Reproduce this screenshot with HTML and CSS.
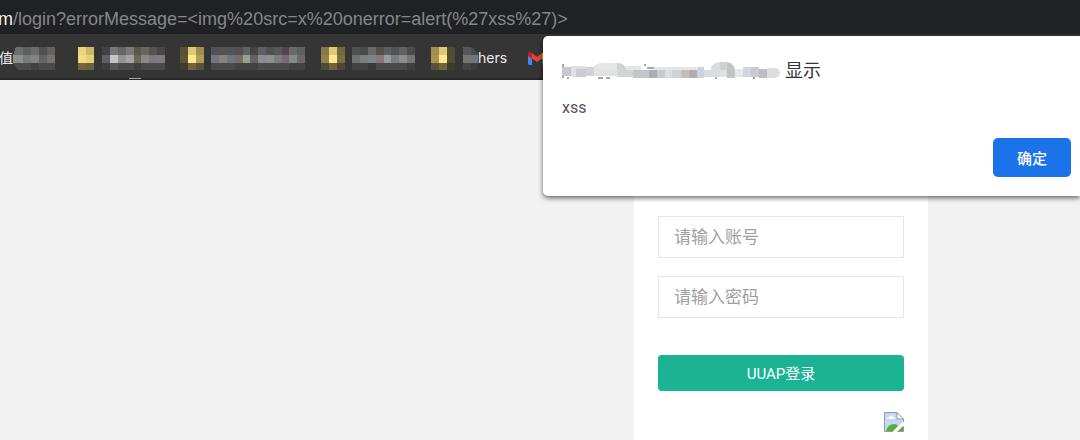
FILE: index.html
```html
<!DOCTYPE html>
<html lang="zh-CN">
<head>
<meta charset="utf-8">
<title>UUAP登录</title>
<link rel="stylesheet" href="styles.css">
</head>
<body>
<header class="browser">
  <div class="address"><span class="host">m</span><span class="path">/login?errorMessage=&lt;img%20src=x%20onerror=alert(%27xss%27)&gt;</span></div>
  <nav class="bookmarks">
    <a class="bookmark" href="#"><span>值</span><svg width="42" height="23" viewBox="0 0 42 23" shape-rendering="crispEdges" aria-hidden="true">
      <path fill="#6d706d" d="M3 0h7v8H0z"/><path fill="#5d605e" d="M10 0h8v8h-8z"/><path fill="#6b6d6c" d="M18 0h8v8h-8z"/><path fill="#505151" d="M26 0h8v8h-8z"/><path fill="#64615f" d="M34 0h8v8h-8z"/>
      <path fill="#8b918c" d="M0 8h10v8H0z"/><path fill="#777b7a" d="M10 8h8v8h-8z"/><path fill="#818383" d="M18 8h8v8h-8z"/><path fill="#636464" d="M26 8h8v8h-8z"/><path fill="#797070" d="M34 8h8v8h-8z"/>
      <path fill="#494a49" d="M0 16h18v7H5z"/><path fill="#404141" d="M18 16h8v7h-8z"/><path fill="#4a4a4a" d="M26 16h16v7H26z"/></svg></a>
    <a class="bookmark" href="#" aria-label="Bookmark folder"><svg width="16" height="23" viewBox="0 0 16 23" shape-rendering="crispEdges" aria-hidden="true">
      <path fill="#ead477" d="M0 0h8v8H0z"/><path fill="#cdb865" d="M8 0h8v8H8z"/><path fill="#f1dc7e" d="M0 8h8v8H0z"/><path fill="#e6d077" d="M8 8h8v8H8z"/><path fill="#716542" d="M0 16h8v7H0z"/><path fill="#6c613e" d="M8 16h8v7H8z"/></svg><svg width="63" height="23" viewBox="0 0 63 23" shape-rendering="crispEdges" aria-hidden="true">
      <path fill="#424244" d="M0 0h8v8H0z"/><path fill="#777778" d="M8 0h8v8H8z"/><path fill="#656666" d="M16 0h8v8h-8z"/><path fill="#777a77" d="M24 0h8v8h-8z"/><path fill="#595750" d="M32 0h7v8h-7z"/><path fill="#696562" d="M39 0h8v8h-8z"/><path fill="#545352" d="M47 0h8v8h-8z"/><path fill="#474648" d="M55 0h8v8h-8z"/>
      <path fill="#5e5f67" d="M0 8h8v8H0z"/><path fill="#c6c4c6" d="M8 8h8v8H8z"/><path fill="#949494" d="M16 8h8v8h-8z"/><path fill="#a1a5a0" d="M24 8h8v8h-8z"/><path fill="#6c6559" d="M32 8h7v8h-7z"/><path fill="#888887" d="M39 8h8v8h-8z"/><path fill="#7c7881" d="M47 8h8v8h-8z"/><path fill="#81797e" d="M55 8h8v8h-8z"/>
      <path fill="#3d3d3e" d="M0 16h8v7H0z"/><path fill="#555556" d="M8 16h8v7H8z"/><path fill="#4b4b4b" d="M16 16h16v7H16z"/><path fill="#404040" d="M32 16h7v7h-7z"/><path fill="#4a4a4a" d="M39 16h24v7H39z"/></svg></a>
    <a class="bookmark" href="#" aria-label="Bookmark folder"><svg width="24" height="23" viewBox="0 0 24 23" shape-rendering="crispEdges" aria-hidden="true">
      <path fill="#575033" d="M0 0h8v8H0z"/><path fill="#dfc976" d="M8 0h8v8H8z"/><path fill="#a18f50" d="M16 0h8v8h-8z"/><path fill="#5d5433" d="M0 8h8v8H0z"/><path fill="#ffe78d" d="M8 8h8v8H8z"/><path fill="#b09d58" d="M16 8h8v8h-8z"/><path fill="#3f3b31" d="M0 16h8v7H0z"/><path fill="#70643d" d="M8 16h8v7H8z"/><path fill="#595138" d="M16 16h8v7h-8z"/></svg><svg width="94" height="23" viewBox="0 0 94 23" shape-rendering="crispEdges" aria-hidden="true">
      <path fill="#50535a" d="M0 0h8v8H0z"/><path fill="#56524f" d="M8 0h8v8H8z"/><path fill="#505359" d="M16 0h8v8h-8z"/><path fill="#525150" d="M24 0h8v8h-8z"/><path fill="#5d635d" d="M32 0h7v8h-7z"/><path fill="#444444" d="M39 0h8v8h-8z"/><path fill="#605e65" d="M47 0h8v8h-8z"/><path fill="#505250" d="M55 0h8v8h-8z"/><path fill="#565858" d="M63 0h8v8h-8z"/><path fill="#514552" d="M71 0h7v8h-7z"/><path fill="#686b67" d="M78 0h8v8h-8z"/><path fill="#5d605e" d="M86 0h8v8h-8z"/>
      <path fill="#707780" d="M0 8h8v8H0z"/><path fill="#8d7e79" d="M8 8h8v8H8z"/><path fill="#6c7682" d="M16 8h8v8h-8z"/><path fill="#786c66" d="M24 8h8v8h-8z"/><path fill="#96a08f" d="M32 8h7v8h-7z"/><path fill="#626365" d="M39 8h8v8h-8z"/><path fill="#908999" d="M47 8h8v8h-8z"/><path fill="#8d908e" d="M55 8h8v8h-8z"/><path fill="#777f7e" d="M63 8h8v8h-8z"/><path fill="#78697a" d="M71 8h7v8h-7z"/><path fill="#858b82" d="M78 8h8v8h-8z"/><path fill="#6e6966" d="M86 8h8v8h-8z"/>
      <path fill="#484949" d="M0 16h24v7H0z"/><path fill="#424242" d="M24 16h23v7H24z"/><path fill="#4b4b4b" d="M47 16h31v7H47z"/><path fill="#434343" d="M78 16h16v7H78z"/></svg></a>
    <a class="bookmark" href="#" aria-label="Bookmark folder"><svg width="24" height="23" viewBox="0 0 24 23" shape-rendering="crispEdges" aria-hidden="true">
      <path fill="#857849" d="M0 0h8v8H0z"/><path fill="#dfc976" d="M8 0h8v8H8z"/><path fill="#74683e" d="M16 0h8v8h-8z"/><path fill="#908149" d="M0 8h8v8H0z"/><path fill="#ffe78d" d="M8 8h8v8H8z"/><path fill="#7c6e40" d="M16 8h8v8h-8z"/><path fill="#504a36" d="M0 16h8v7H0z"/><path fill="#70643d" d="M8 16h8v7H8z"/><path fill="#4b4635" d="M16 16h8v7h-8z"/></svg><svg width="63" height="23" viewBox="0 0 63 23" shape-rendering="crispEdges" aria-hidden="true">
      <path fill="#505252" d="M0 0h8v8H0z"/><path fill="#484c4c" d="M8 0h8v8H8z"/><path fill="#686a68" d="M16 0h8v8h-8z"/><path fill="#594e4c" d="M24 0h8v8h-8z"/><path fill="#5d5e60" d="M32 0h7v8h-7z"/><path fill="#525352" d="M39 0h8v8h-8z"/><path fill="#606160" d="M47 0h8v8h-8z"/><path fill="#4c4d4d" d="M55 0h8v8h-8z"/>
      <path fill="#707272" d="M0 8h8v8H0z"/><path fill="#7b807d" d="M8 8h8v8H8z"/><path fill="#7d838b" d="M16 8h8v8h-8z"/><path fill="#887674" d="M24 8h8v8h-8z"/><path fill="#9a9ba2" d="M32 8h7v8h-7z"/><path fill="#7b7c7d" d="M39 8h8v8h-8z"/><path fill="#8d8f8d" d="M47 8h8v8h-8z"/><path fill="#747674" d="M55 8h8v8h-8z"/>
      <path fill="#434343" d="M0 16h16v7H0z"/><path fill="#393939" d="M16 16h8v7h-8z"/><path fill="#494949" d="M24 16h31v7H24z"/><path fill="#3e3e3e" d="M55 16h8v7h-8z"/></svg></a>
    <a class="bookmark" href="#"><svg width="24" height="23" viewBox="0 0 24 23" shape-rendering="crispEdges" aria-hidden="true">
      <path fill="#a18f50" d="M0 0h8v8H0z"/><path fill="#dfc976" d="M8 0h8v8H8z"/><path fill="#524b34" d="M16 0h8v8h-8z"/><path fill="#a89650" d="M0 8h8v8H0z"/><path fill="#ffe78d" d="M8 8h8v8H8z"/><path fill="#554d31" d="M16 8h8v8h-8z"/><path fill="#595138" d="M0 16h8v7H0z"/><path fill="#70643d" d="M8 16h8v7H8z"/><path fill="#3d3a31" d="M16 16h8v7h-8z"/></svg><span class="label"><svg width="15" height="23" viewBox="0 0 15 23" aria-hidden="true">
      <path fill="#555756" d="M0 0h8v8H0z"/><path fill="#4a4b4b" d="M8 0q5 2 7 8H8z"/><path fill="#747573" d="M0 8h8v8H0z"/><path fill="#747676" d="M8 8h7v8H8z"/><path fill="#444" d="M0 16h8v7H0z"/><path fill="#3b3b3b" d="M8 16h7l-2 7H8z"/></svg>hers</span></a>
    <a class="bookmark" href="#" aria-label="Gmail"><svg width="20" height="15" viewBox="0 0 20 15" aria-hidden="true">
      <path fill="#4285f4" d="M0 4l4 3v7H1.500Q0 14 0 12.500z"/><path fill="#34a853" d="M14 7l4-3v8.500q0 1.500-1.500 1.500H14z"/><path fill="#fbbc04" d="M14 2.500Q18-1.500 18 3v2l-4 3z"/><path fill="#c5221f" d="M0 5V3q0-4.500 4-1v6z"/><path fill="#ea4335" d="M4 2l5 4 5-4v5.500L9 11 4 7.500z"/></svg></a>
  </nav>
  <i class="tick"></i>
</header>
<main class="page">
  <form class="login">
    <input class="field" type="text" placeholder="请输入账号" aria-label="请输入账号">
    <input class="field" type="password" placeholder="请输入密码" aria-label="请输入密码">
    <button class="submit" type="button">UUAP登录</button>
    <svg class="broken" width="20" height="20" viewBox="0 0 20 20" role="img" aria-label="Broken image">
      <path fill="#c7d8f5" d="M1 1h12l6 6v3L9 19H1z"/><path fill="#fff" d="M3 7q0-2 2-2 2-3 4 0 2 0 2 2z"/>
      <path fill="#55ad35" d="M2 19q2-7 8-7 3 0 4 2l-5 5z"/><path fill="#55ad35" d="M14 19l5-5v5z"/>
      <path fill="#fff" d="M13 1l6 6h-6z"/><path fill="none" stroke="#999" d="M9 19.500H.500V.500H13l6.500 6.500v3M13 .500V7h6.500M13.500 19.500h6v-5"/>
    </svg>
  </form>
</main>
<section class="dialog" role="dialog" aria-label="显示">
  <h1 class="title"><svg width="218" height="19" viewBox="0 0 218 19" aria-hidden="true">
    <path stroke="#55555c" stroke-width="1" d="M1 2v14M6 15v2M36 16h5M44 16h4M82 3h2M85 6h7M154 15v2M192 15v2"/>
    <path fill="#cbc6ce" d="M0 5h9v9H0z"/><path fill="#dedfe2" d="M9 4h15v11H9z"/><path fill="#c9cdd3" d="M14 7h10v8H14z"/><path fill="#d2d2d2" d="M24 5h9v9h-9z"/>
    <path fill="#e6e6e7" d="M32 4q5-4 11-3h12v7H32z"/><path fill="#cfd0d2" d="M55 1q8 0 9 6h-9z"/><path fill="#e1e2e3" d="M32 7h23v7H32z"/><path fill="#d3d4d6" d="M55 7h16v8H55z"/>
    <path fill="#e4e5e7" d="M64 4h15v4H64zM92 5h42v4H92z"/><path fill="#c5c6c8" d="M71 8h16v8H71z"/><path fill="#aab0b9" d="M87 8h8v8h-8z"/><path fill="#c8cbd0" d="M95 8h8v8h-8z"/><path fill="#dededf" d="M103 8h7v8h-7z"/><path fill="#cdd3db" d="M110 8h9v8h-9z"/><path fill="#c3bdbb" d="M119 8h8v8h-8z"/><path fill="#b6aeae" d="M127 8h8v8h-8z"/><path fill="#c9d4e0" d="M135 5h7v11h-7z"/>
    <path fill="#dadde0" d="M142 8h16v7h-16zM149 5q3-5 10-5v8h-10z"/><path fill="#cfd1d3" d="M158 0h7v8h-7z"/><path fill="#c2c5c7" d="M165 0q8 2 8 9v7h-8z"/><path fill="#dfe2e5" d="M158 8h7v7h-7z"/><path fill="#eae7e5" d="M173 7h8v8h-8z"/><path fill="#d1d7df" d="M181 5h8v10h-8z"/><path fill="#cacbce" d="M189 5h8v10h-8z"/><path fill="#bebdc3" d="M197 7h8v9h-8z"/><path fill="#dcdee0" d="M205 6h9q4 1 4 5t-5 5h-8z"/></svg><span>显示</span></h1>
  <p class="message">xss</p>
  <button class="ok" type="button">确定</button>
</section>
</body>
</html>
```
FILE: styles.css
```css
* { box-sizing: border-box; }
body {
  margin: 0;
  min-height: 100vh;
  display: flex;
  flex-direction: column;
  overflow: hidden;
  position: relative;
  background: #f2f2f2;
  font-family: Roboto, "Noto Sans CJK SC", sans-serif;
}
.browser { position: relative; background: #353535; border-bottom: 2px solid #262626; }
.address {
  display: flex;
  height: 34px;
  padding-top: 3px;
  background: #202124;
  color: #868789;
  font-family: "Liberation Sans", sans-serif;
  font-size: 18px;
  line-height: 32px;
  white-space: nowrap;
}
.host { display: flex; justify-content: flex-end; width: 13px; color: #f1f1f1; }
.bookmarks {
  height: 44px;
  padding-top: 4px;
  display: flex;
  align-items: center;
  overflow: hidden;
}
.bookmark {
  display: flex;
  flex: none;
  align-items: center;
  gap: 7px;
  margin-right: 16px;
  color: #eee;
  font-family: Inter, "Noto Sans CJK SC", sans-serif;
  font-size: 14px;
  line-height: 22px;
  text-decoration: none;
}
.bookmark:first-child { gap: 0; margin-left: -1px; margin-right: 23px; }
.bookmark:nth-child(2) { gap: 8px; margin-right: 15px; }
.bookmark:nth-child(5) { gap: 8px; margin-right: 21px; }
.label { display: flex; align-items: center; }
.tick { position: absolute; left: 129px; bottom: -1px; width: 12px; height: 1px; background: #aaa; }
.page { flex: 1; display: flex; justify-content: flex-end; padding-right: 152px; }
.login {
  width: 294px;
  padding: 136px 24px 0;
  display: flex;
  flex-direction: column;
  background: #fff;
}
.field {
  height: 42px;
  margin: 0 0 18px;
  padding: 0 15px 4px;
  border: 1px solid #e5e6e7;
  border-radius: 0;
  background: #fff;
  color: #555;
  font: 17px "Noto Sans CJK SC", sans-serif;
}
.field::placeholder { color: #a0a0a0; opacity: 1; }
.submit {
  height: 36px;
  margin-top: 19px;
  padding: 0 0 2px;
  border: 0;
  border-radius: 4px;
  background: #1ab394;
  color: #fff;
  font: 15px Roboto, "Noto Sans CJK SC", sans-serif;
}
.broken { align-self: flex-end; margin-top: 21px; }
.dialog {
  position: absolute;
  top: 36px;
  left: 543px;
  right: 0;
  padding: 22px 9px 19px 19px;
  display: flex;
  flex-direction: column;
  border-radius: 5px 0 0 5px;
  background: #fff;
  box-shadow: 0 2px 5px rgba(0, 0, 0, .6);
}
.title {
  margin: 0;
  display: flex;
  align-items: center;
  gap: 5px;
  color: #333;
  font-size: 18px;
  font-weight: 400;
  line-height: 26px;
}
.message { margin: 12px 0 0; color: #555; font-size: 16px; line-height: 24px; }
.ok {
  align-self: flex-end;
  width: 78px;
  height: 39px;
  margin-top: 18px;
  border: 0;
  border-radius: 5px;
  background: #1a73e8;
  color: #fff;
  font: 500 15px "Noto Sans CJK SC", sans-serif;
}
```
